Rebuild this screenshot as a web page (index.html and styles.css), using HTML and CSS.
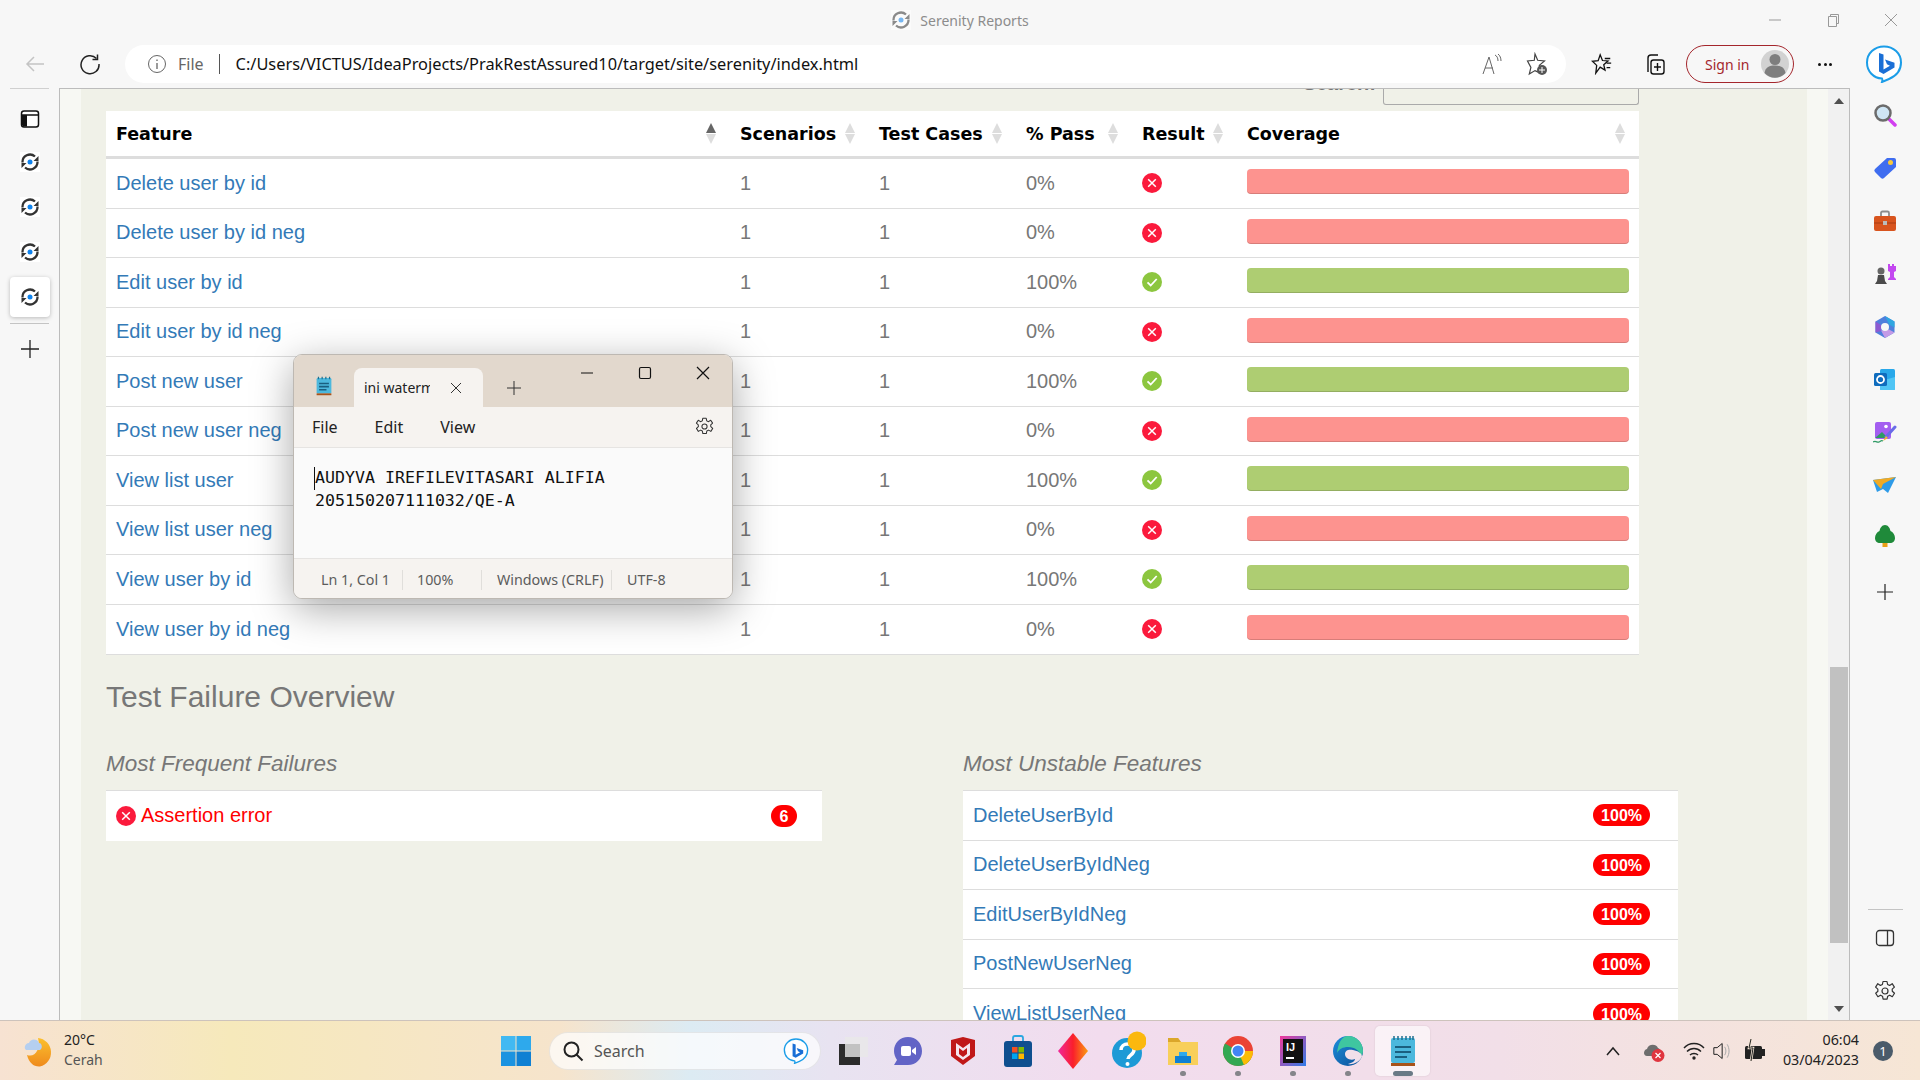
FILE: index.html
```html
<!DOCTYPE html>
<html lang="en">
<head>
    <meta charset="UTF-8" />
    <title>Serenity Reports</title>
    <link rel="stylesheet" href="styles.css">
</head>
<body>
    <svg class="defs" width="0" height="0">
        <defs>
            <symbol id="sync" viewBox="0 0 20 20">
                <rect width="20" height="20" fill="#fff" />
                <path d="M2.500 10.500a7.500 7.500 0 0 1 12.500-6M17.500 9.500a7.500 7.500 0 0 1-12.500 6" fill="none" stroke="#333" stroke-width="2.300" />
                <path d="M18.500 4v5h-5zM1.500 16v-5h5z" fill="#333" />
                <circle cx="10" cy="10" r="2.500" fill="#0f83ee" />
            </symbol>
            <symbol id="fail" viewBox="0 0 20 20">
                <circle cx="10" cy="10" r="10" fill="#fb1a3c" />
                <path d="M6.200 6.200l7.600 7.600M13.800 6.200l-7.600 7.600" stroke="#fff" stroke-width="1.500" />
            </symbol>
            <symbol id="pass" viewBox="0 0 20 20">
                <circle cx="10" cy="10" r="10" fill="#8cc63f" />
                <path d="M5.500 10.300l3.200 3.200 6-6.500" fill="none" stroke="#fff" stroke-width="1.800" />
            </symbol>
            <symbol id="bing" viewBox="0 0 38 38">
                <path d="M19 1.500c9.500 0 17 6.800 17 16 0 8-5 13.500-12 16.500l-7 3c.5-1.500.5-2.800 0-3.500C8.500 33 2 26.500 2 17.500 2 8.300 9.500 1.500 19 1.500z" fill="#fff" stroke="#1b9de8" stroke-width="2" />
                <path d="M14 8l4.500 1.500v15l6.500-3.700-3-1.500-2-4.800 9.500 3.300v4.700L18.500 29 14 26.500z" fill="#1a6fd6" />
            </symbol>
            <symbol id="gear" viewBox="0 0 22 22">
                <path d="M9 1.500h4l.6 3 2 .9 2.600-1.700 2.200 3.400-2.200 2 .1 2.100 2.200 2-2.200 3.500-2.600-1.500-2 1-.6 3h-4l-.6-3-2-1-2.600 1.500-2.200-3.500 2.200-2-.1-2.100-2.200-2 2.200-3.400 2.600 1.700 2-.9z" fill="none" stroke="#333" stroke-width="1.200" stroke-linejoin="round" />
                <circle cx="11" cy="11" r="3" fill="none" stroke="#333" stroke-width="1.200" />
            </symbol>
        </defs>
    </svg>

    <header class="titlebar">
        <svg class="title-icon" width="20" height="20"><use href="#sync" /></svg>
        <span class="title-text">Serenity Reports</span>
        <div class="win-btns">
            <svg width="14" height="14" viewBox="0 0 14 14"><path d="M1 7h12" stroke="#999" /></svg>
            <svg width="14" height="14" viewBox="0 0 14 14"><path d="M2.500 3.500h8v10h-8zM4.500 3.500v-2h8v9h-2" fill="none" stroke="#999" /></svg>
            <svg width="14" height="14" viewBox="0 0 14 14"><path d="M1 1l12 12M13 1L1 13" stroke="#999" /></svg>
        </div>
    </header>

    <nav class="toolbar">
        <svg class="tool-back" width="22" height="22" viewBox="0 0 22 22"><path d="M20 11H3M10 4l-7 7 7 7" fill="none" stroke="#c4c4c4" stroke-width="1.500" /></svg>
        <svg class="tool-reload" width="22" height="22" viewBox="0 0 22 22"><path d="M17.500 5.500A9 9 0 1 0 20 11" fill="none" stroke="#222" stroke-width="1.500" /><path d="M18.500 1.500v5h-5" fill="none" stroke="#222" stroke-width="1.500" /></svg>
        <div class="address">
            <svg width="20" height="20" viewBox="0 0 20 20"><circle cx="10" cy="10" r="8.500" fill="none" stroke="#666" /><path d="M10 9v6M10 5.500v1.500" stroke="#666" stroke-width="1.300" /></svg>
            <span class="addr-file">File</span>
            <span class="addr-sep"></span>
            <span class="addr-url">C:/Users/VICTUS/IdeaProjects/PrakRestAssured10/target/site/serenity/index.html</span>
            <svg class="addr-read" width="24" height="24" viewBox="0 0 24 24"><path d="M3 22l6-17 5 17M5 16h8M15 3c2 1 3 3 3 6M18 2c2 1.500 3 4 3 7" fill="none" stroke="#666" /></svg>
            <svg class="addr-star" width="24" height="24" viewBox="0 0 24 24"><path d="M11 2l2.700 6.300 6.800.6-5.200 4.500 1.500 3-2 4-3.800-1.800-5.700 3.400 1.600-6.600L3.500 9l6.800-.7z" fill="none" stroke="#444" stroke-width="1.200" /><circle cx="18" cy="18" r="5" fill="#555" /><path d="M18 15v6M15 18h6" stroke="#fff" /></svg>
        </div>
        <svg class="tool-fav" width="22" height="22" viewBox="0 0 24 24"><path d="M10 2l2.500 6.200 6 .5-4.600 4 1.400 6-5.300-3.200-4.800 6.500 1-8.500-4.700-4.500 6.300-.6z" fill="none" stroke="#111" stroke-width="1.400" /><path d="M15 6h6M17 11h5M17 16h4" stroke="#111" stroke-width="1.400" /></svg>
        <svg class="tool-coll" width="24" height="24" viewBox="0 0 24 24"><path d="M6 20V6q0-3 3-3h7" fill="none" stroke="#111" stroke-width="1.400" /><rect x="9" y="8" width="13" height="14" rx="2.500" fill="none" stroke="#111" stroke-width="1.400" /><path d="M15.500 11v8M12 15h7" stroke="#111" stroke-width="1.400" /></svg>
        <div class="signin">
            <span>Sign in</span>
            <svg width="28" height="28" viewBox="0 0 28 28"><circle cx="14" cy="14" r="14" fill="#d2d2d2" /><circle cx="14" cy="9.500" r="5.500" fill="#7e7e7e" /><path d="M3.500 23c1-6 5-7.500 10.500-7.500s9.500 1.500 10.500 7.500a14 14 0 0 1-21 0z" fill="#7e7e7e" /></svg>
        </div>
        <span class="dots"><i></i><i></i><i></i></span>
        <svg class="tool-bing" width="38" height="38"><use href="#bing" /></svg>
    </nav>

    <div class="middle">
        <aside class="left-rail">
            <svg class="rail-panel" width="20" height="20" viewBox="0 0 20 20"><rect x="1.500" y="2" width="17" height="16" rx="2.500" fill="#fff" stroke="#111" stroke-width="1.500" /><path d="M1.500 6h17" stroke="#111" stroke-width="1.500" /><path d="M2 6h5v11.500H4q-2 0-2-2z" fill="#111" /></svg>
            <span class="rail-tab"><svg width="20" height="20"><use href="#sync" /></svg></span>
            <span class="rail-tab"><svg width="20" height="20"><use href="#sync" /></svg></span>
            <span class="rail-tab"><svg width="20" height="20"><use href="#sync" /></svg></span>
            <span class="rail-tab active"><svg width="20" height="20"><use href="#sync" /></svg></span>
            <span class="rail-line"></span>
            <svg class="rail-plus" width="18" height="18" viewBox="0 0 18 18"><path d="M0 9h18M9 0v18" stroke="#222" stroke-width="1.300" /></svg>
        </aside>

        <main class="page">
            <div class="gutter"></div>
            <div class="content">
                <div class="search-row">
                    <label class="search-label">Search:</label>
                    <div class="search-input"></div>
                </div>

                <table class="features">
                    <thead>
                        <tr>
                            <th class="c-feature"><div>Feature<span class="sort asc"></span></div></th>
                            <th class="c-scen"><div>Scenarios<span class="sort"></span></div></th>
                            <th class="c-case"><div>Test Cases<span class="sort"></span></div></th>
                            <th class="c-pass"><div>% Pass<span class="sort"></span></div></th>
                            <th class="c-result"><div>Result<span class="sort"></span></div></th>
                            <th class="c-cover"><div>Coverage<span class="sort"></span></div></th>
                        </tr>
                    </thead>
                    <tbody>
                        <tr><td><a href="#">Delete user by id</a></td><td>1</td><td>1</td><td>0%</td><td><svg class="status"><use href="#fail" /></svg></td><td><div class="bar red"></div></td></tr>
                        <tr><td><a href="#">Delete user by id neg</a></td><td>1</td><td>1</td><td>0%</td><td><svg class="status"><use href="#fail" /></svg></td><td><div class="bar red"></div></td></tr>
                        <tr><td><a href="#">Edit user by id</a></td><td>1</td><td>1</td><td>100%</td><td><svg class="status"><use href="#pass" /></svg></td><td><div class="bar green"></div></td></tr>
                        <tr><td><a href="#">Edit user by id neg</a></td><td>1</td><td>1</td><td>0%</td><td><svg class="status"><use href="#fail" /></svg></td><td><div class="bar red"></div></td></tr>
                        <tr><td><a href="#">Post new user</a></td><td>1</td><td>1</td><td>100%</td><td><svg class="status"><use href="#pass" /></svg></td><td><div class="bar green"></div></td></tr>
                        <tr><td><a href="#">Post new user neg</a></td><td>1</td><td>1</td><td>0%</td><td><svg class="status"><use href="#fail" /></svg></td><td><div class="bar red"></div></td></tr>
                        <tr><td><a href="#">View list user</a></td><td>1</td><td>1</td><td>100%</td><td><svg class="status"><use href="#pass" /></svg></td><td><div class="bar green"></div></td></tr>
                        <tr><td><a href="#">View list user neg</a></td><td>1</td><td>1</td><td>0%</td><td><svg class="status"><use href="#fail" /></svg></td><td><div class="bar red"></div></td></tr>
                        <tr><td><a href="#">View user by id</a></td><td>1</td><td>1</td><td>100%</td><td><svg class="status"><use href="#pass" /></svg></td><td><div class="bar green"></div></td></tr>
                        <tr><td><a href="#">View user by id neg</a></td><td>1</td><td>1</td><td>0%</td><td><svg class="status"><use href="#fail" /></svg></td><td><div class="bar red"></div></td></tr>
                    </tbody>
                </table>

                <h2 class="overview-title">Test Failure Overview</h2>
                <div class="overview">
                    <section class="overview-col">
                        <h3>Most Frequent Failures</h3>
                        <div class="list">
                            <div class="list-row">
                                <span class="error-name"><svg class="status"><use href="#fail" /></svg>Assertion error</span>
                                <span class="badge round">6</span>
                            </div>
                        </div>
                    </section>
                    <section class="overview-col">
                        <h3>Most Unstable Features</h3>
                        <div class="list">
                            <div class="list-row"><a href="#">DeleteUserById</a><span class="badge">100%</span></div>
                            <div class="list-row"><a href="#">DeleteUserByIdNeg</a><span class="badge">100%</span></div>
                            <div class="list-row"><a href="#">EditUserByIdNeg</a><span class="badge">100%</span></div>
                            <div class="list-row"><a href="#">PostNewUserNeg</a><span class="badge">100%</span></div>
                            <div class="list-row"><a href="#">ViewListUserNeg</a><span class="badge">100%</span></div>
                        </div>
                    </section>
                </div>
            </div>
            <div class="gutter"></div>
            <div class="scrollbar">
                <span class="arrow-up"></span>
                <span class="thumb"></span>
                <span class="arrow-down"></span>
            </div>
        </main>

        <aside class="right-rail">
            <svg width="24" height="24" viewBox="0 0 24 24"><path d="M15 15l7 7" stroke="#d23ff0" stroke-width="3.500" stroke-linecap="round" /><circle cx="10" cy="10" r="7.500" fill="#cfe6f5" stroke="#6b6b6b" stroke-width="2.500" /></svg>
            <svg width="24" height="24" viewBox="0 0 24 24"><path d="M14 2h7q2 0 2 2v7L11 22q-1.500 1.500-3 0l-6-6q-1.500-1.500 0-3z" fill="#3f6df0" /><circle cx="17.500" cy="6.500" r="2.500" fill="#f8c83a" /></svg>
            <svg width="24" height="24" viewBox="0 0 24 24"><path d="M8 7V4q0-1.500 1.500-1.500h5Q16 2.500 16 4v3" fill="none" stroke="#8c8c8c" stroke-width="1.800" /><rect x="1" y="7" width="22" height="15" rx="2" fill="#d8541e" /><path d="M1 14h22" stroke="#a83c12" /><rect x="10" y="12" width="4" height="4" fill="#bbb" /></svg>
            <svg width="24" height="24" viewBox="0 0 24 24"><path d="M15 2h2v2h2V2h2v2h2v-2 7l-2 1v5l2 2v1h-8v-1l2-2v-5l-2-1z" fill="#c348f0" /><circle cx="8" cy="9" r="3.500" fill="#666" /><path d="M5 13h6l1 6 2 3H2l2-3z" fill="#4b4b4b" /></svg>
            <svg width="24" height="24" viewBox="0 0 24 24"><path d="M12 1l9.500 5.500v11L12 23l-9.500-5.500v-11z" fill="#4f7fdc" /><path d="M12 1l9.500 5.500v6L16 9.500z" fill="#2fa6e0" /><path d="M2.500 17.500v-11L8 10v6z" fill="#8d5ad0" /><path d="M12 23l9.500-5.500-5.500-3-8 1z" fill="#c49ae6" /><circle cx="12" cy="12" r="4" fill="#f7f7f7" /></svg>
            <svg width="24" height="24" viewBox="0 0 24 24"><rect x="7" y="1" width="15" height="21" rx="1.500" fill="#28a8ea" /><path d="M7 13l8-2 7-2v12q0 1-1 1H8q-1 0-1-1z" fill="#50c5f5" /><rect x="1" y="5" width="13" height="13" rx="1.500" fill="#0f6cbd" /><circle cx="7.500" cy="11.500" r="3.500" fill="none" stroke="#fff" stroke-width="1.800" /></svg>
            <svg width="24" height="24" viewBox="0 0 24 24"><rect x="2" y="1" width="16" height="17" rx="2" fill="#a35ef0" /><path d="M2 17l7-6 6 6z" fill="#2e9a64" /><circle cx="13" cy="5.500" r="1.800" fill="#fff" /><path d="M13 16l9-10" stroke="#6a6be8" stroke-width="3" stroke-linecap="round" /><path d="M10 20l3-5 2 2z" fill="#f5b52e" /><path d="M0 21c3-2 4 1 6 0s2-2 4-1" fill="none" stroke="#2e9a64" stroke-width="1.300" /></svg>
            <svg class="rail-send" width="24" height="24" viewBox="0 0 24 24"><path d="M0 7l23-3-8 16-5-4-6 3z" fill="#2e9be8" /><path d="M0 7l23-3L10 11l-2 5z" fill="#f0aa24" /></svg>
            <svg width="24" height="24" viewBox="0 0 24 24"><rect x="9.500" y="17" width="5" height="6" fill="#e8a017" /><path d="M12 1c3 0 5 3 5.500 6 2.500 1 4.500 4 4.500 7 0 3-2 5-5 5H7c-3 0-5-2-5-5 0-3 2-6 4.500-7C7 4 9 1 12 1z" fill="#1f8a3a" /></svg>
            <svg class="rail-plus" width="16" height="16" viewBox="0 0 16 16"><path d="M0 8h16M8 0v16" stroke="#222" stroke-width="1.200" /></svg>
            <span class="rail-spacer"></span>
            <span class="rail-line"></span>
            <svg width="20" height="18" viewBox="0 0 20 18"><rect x="1.500" y="1.500" width="17" height="15" rx="3" fill="none" stroke="#333" stroke-width="1.300" /><path d="M12.500 1.500v15" stroke="#333" stroke-width="1.300" /></svg>
            <svg class="rail-gear" width="22" height="22" viewBox="0 0 22 22"><use href="#gear" /></svg>
        </aside>
    </div>

    <footer class="taskbar">
        <div class="weather">
            <svg width="30" height="32" viewBox="0 0 30 32"><defs><linearGradient id="moon" x1="0" y1="0" x2="0" y2="1"><stop offset="0" stop-color="#fbc02e" /><stop offset="1" stop-color="#ef8a1c" /></linearGradient></defs><path d="M14 3a14.500 14.500 0 0 1 2 28.500C10 32 5 28 3 20c8 3 14-6 11-17z" fill="url(#moon)" /><path d="M2 15c-3-3 0-7 3-7 1-4 8-5 10 0 3 0 4 5 1 7z" fill="#b5cff0" /></svg>
            <div class="weather-text"><span>20°C</span><span class="muted">Cerah</span></div>
        </div>
        <svg class="start" width="30" height="30" viewBox="0 0 30 30"><rect width="14.500" height="14.500" fill="#42b9f2" /><rect x="15.500" width="14.500" height="14.500" fill="#2ea9ec" /><rect y="15.500" width="14.500" height="14.500" fill="#1b93e0" /><rect x="15.500" y="15.500" width="14.500" height="14.500" fill="#0f80d3" /></svg>
        <div class="task-search">
            <svg width="22" height="22" viewBox="0 0 22 22"><circle cx="9.500" cy="9.500" r="7" fill="none" stroke="#222" stroke-width="2" /><path d="M14.500 14.500l6 6" stroke="#222" stroke-width="2" /></svg>
            <span>Search</span>
            <svg class="task-bing" width="26" height="26"><use href="#bing" /></svg>
        </div>
        <div class="task-apps">
            <span class="app"><svg width="32" height="32" viewBox="0 0 32 32"><rect x="2" y="9" width="21" height="21" fill="#2b2b2b" /><rect x="8" y="2" width="23" height="20" fill="#e9e9e9" fill-opacity=".8" /></svg></span>
            <span class="app"><svg width="30" height="30" viewBox="0 0 30 30"><path d="M15 1c8 0 14 6 14 14s-6 14-14 14H1l3-5C2 21 1 18 1 15 1 7 7 1 15 1z" fill="#6264c6" /><rect x="8" y="10" width="10" height="10" rx="2" fill="#fff" /><path d="M19 14l4-3v8l-4-3z" fill="#fff" /></svg></span>
            <span class="app"><svg width="28" height="30" viewBox="0 0 28 30"><path d="M2 4l12-3 12 3v16l-12 9-12-9z" fill="#c01818" /><path d="M7 7l7 5 7-5v12l-7 5-7-5z" fill="#f5e6ee" /><path d="M10 12l4 3 4-3v6l-4 3-4-3z" fill="#c01818" /></svg></span>
            <span class="app"><svg width="28" height="32" viewBox="0 0 28 32"><path d="M9 7V3q0-2 2-2h6q2 0 2 2v4" fill="none" stroke="#2aa7e0" stroke-width="1.800" /><rect x="0" y="6" width="28" height="26" rx="3" fill="#0f4f8f" /><rect x="8" y="12" width="5.500" height="5.500" fill="#f25022" /><rect x="14.500" y="12" width="5.500" height="5.500" fill="#7fba00" /><rect x="8" y="18.500" width="5.500" height="5.500" fill="#00a4ef" /><rect x="14.500" y="18.500" width="5.500" height="5.500" fill="#ffb900" /></svg></span>
            <span class="app"><svg width="30" height="36" viewBox="0 0 30 36"><defs><linearGradient id="rhomb" x1="0" x2="1"><stop offset="0" stop-color="#f0289a" /><stop offset=".5" stop-color="#fa1f2c" /><stop offset="1" stop-color="#fb9d10" /></linearGradient></defs><path d="M15 0l15 18-15 18L0 18z" fill="url(#rhomb)" /></svg></span>
            <span class="app app-help"><svg width="34" height="40" viewBox="0 0 34 40"><circle cx="15" cy="22" r="15" fill="#1d9ad6" /><path d="M9 19c0-8 13-8 13 0 0 5-6 5-6 9" fill="none" stroke="#fff" stroke-width="3.500" /><circle cx="15.500" cy="33" r="2" fill="#fff" /><circle cx="25" cy="10" r="9.500" fill="#fbb80f" /></svg></span>
            <span class="app run"><svg width="30" height="28" viewBox="0 0 30 28"><path d="M0 3q0-2 2-2h8l3 4h17v23H0z" fill="#f8cf5a" /><path d="M0 1h10l3 4H0z" fill="#dba72a" /><path d="M7 19h16v7H7z" fill="#0f80d3" /><path d="M11 15h8v4h-8z" fill="#2ea9ec" /></svg></span>
            <span class="app run"><svg width="30" height="30" viewBox="0 0 30 30"><circle cx="15" cy="15" r="15" fill="#ea4335" /><path d="M15 15L2 7.500A15 15 0 0 0 15 30z" fill="#34a853" /><path d="M15 15l13 7.500A15 15 0 0 1 15 30z" fill="#34a853" /><path d="M15 15h15a15 15 0 0 1-9 14z" fill="#fbbc05" /><circle cx="15" cy="15" r="7" fill="#fff" /><circle cx="15" cy="15" r="5.500" fill="#4285f4" /></svg></span>
            <span class="app run"><svg width="28" height="30" viewBox="0 0 28 30"><defs><linearGradient id="idea" x1="0" y1="0" x2="1" y2="1"><stop offset="0" stop-color="#f0389a" /><stop offset="1" stop-color="#2e7de8" /></linearGradient></defs><rect x="1" width="26" height="30" fill="url(#idea)" /><rect x="4" y="3" width="20" height="24" fill="#111" /><text x="7" y="15" class="idea-text">IJ</text><rect x="7" y="21" width="8" height="2" fill="#fff" /></svg></span>
            <span class="app run"><svg width="30" height="30" viewBox="0 0 30 30"><defs><linearGradient id="edge" x1="0" y1="0" x2="1" y2="1"><stop offset="0" stop-color="#1c8fdc" /><stop offset="1" stop-color="#0c4f96" /></linearGradient></defs><circle cx="15" cy="15" r="15" fill="url(#edge)" /><path d="M15 0c9 0 15 7 15 15 0 2-1 4-2 5-1-5-6-9-13-9-5 0-9 2-11 6C5 7 9 0 15 0z" fill="#3fc6a0" /><path d="M12 18c0-4 4-5 8-4 5 1 9 3 9 7-3 5-9 8-14 7 4-1 7-3 7-5-5 2-10-1-10-5z" fill="#f1e0ea" /></svg></span>
            <span class="app active"><svg width="26" height="32" viewBox="0 0 26 32"><rect x="1" y="3" width="24" height="25" rx="2" fill="#4cb8dd" /><path d="M4 1v4M8 1v4M12 1v4M16 1v4M20 1v4M23 1v4" stroke="#1f6f8f" stroke-width="1.500" /><path d="M5 12h16M5 17h16M5 22h12" stroke="#1a5f80" stroke-width="2" /><rect x="1" y="28" width="24" height="3" fill="#a8531a" /></svg></span>
        </div>
        <div class="tray">
            <svg class="tray-chev" width="16" height="10" viewBox="0 0 16 10"><path d="M2 9l6-7 6 7" fill="none" stroke="#222" stroke-width="1.500" /></svg>
            <svg class="tray-cloud" width="22" height="24" viewBox="0 0 22 24"><path d="M4 17c-4 0-4-6 0-7 1-5 9-6 11-1 3 1 3 5 2 8z" fill="#6d6d6d" /><circle cx="15" cy="16.500" r="6.500" fill="#e0353f" /><path d="M12.500 14l5 5M17.500 14l-5 5" stroke="#fff" stroke-width="1.200" /></svg>
            <svg class="tray-wifi" width="22" height="20" viewBox="0 0 22 20"><path d="M1 7c5-6 15-6 20 0M4 10.500c4-4 10-4 14 0M7 14c2-2 6-2 8 0" fill="none" stroke="#222" stroke-width="1.400" /><circle cx="11" cy="17" r="1.700" fill="#222" /></svg>
            <svg class="tray-vol" width="20" height="22" viewBox="0 0 24 26"><path d="M1 9v8h4l6 5V4L5 9z" fill="none" stroke="#222" stroke-width="1.200" /><path d="M14 8c2 3 2 7 0 10M17 5c3 5 3 11 0 16" fill="none" stroke="#aaa" stroke-width="1.200" /></svg>
            <svg class="tray-bat" width="22" height="26" viewBox="0 0 22 26"><rect x="1" y="8" width="17" height="13" rx="1.500" fill="#222" /><rect x="18" y="11" width="3" height="7" fill="#222" /><path d="M7 1l-2 9h4l-2 13" fill="none" stroke="#f5e6d5" stroke-width="2.500" /><path d="M7 1l-2 9h4l-2 13" fill="none" stroke="#222" /></svg>
            <div class="clock"><span>06:04</span><span>03/04/2023</span></div>
            <span class="notif">1</span>
        </div>
    </footer>

    <div class="notepad">
        <div class="np-title">
            <svg class="np-icon" width="16" height="20" viewBox="0 0 26 32"><rect x="1" y="3" width="24" height="25" rx="2" fill="#4cb8dd" /><path d="M4 1v4M10 1v4M16 1v4M22 1v4" stroke="#1f6f8f" stroke-width="2" /><path d="M5 12h16M5 17h16M5 22h12" stroke="#1a5f80" stroke-width="2.500" /><rect x="1" y="28" width="24" height="3" fill="#a8531a" /></svg>
            <div class="np-tab">
                <span class="np-tab-name">ini watermark</span>
                <svg width="12" height="12" viewBox="0 0 12 12"><path d="M1 1l10 10M11 1L1 11" stroke="#333" /></svg>
            </div>
            <svg class="np-new" width="14" height="14" viewBox="0 0 14 14"><path d="M0 7h14M7 0v14" stroke="#333" /></svg>
            <div class="np-controls">
                <svg width="14" height="14" viewBox="0 0 14 14"><path d="M1 7h12" stroke="#111" stroke-width="1.200" /></svg>
                <svg width="14" height="14" viewBox="0 0 14 14"><rect x="1.500" y="1.500" width="11" height="11" rx="1.500" fill="none" stroke="#111" stroke-width="1.200" /></svg>
                <svg width="14" height="14" viewBox="0 0 14 14"><path d="M1 1l12 12M13 1L1 13" stroke="#111" stroke-width="1.200" /></svg>
            </div>
        </div>
        <div class="np-menu">
            <span>File</span><span>Edit</span><span>View</span>
            <svg width="19" height="19" viewBox="0 0 22 22"><use href="#gear" /></svg>
        </div>
        <div class="np-text"><span class="caret"></span>AUDYVA IREFILEVITASARI ALIFIA<br>205150207111032/QE-A</div>
        <div class="np-status">
            <span class="st-pos">Ln 1, Col 1</span>
            <span class="st-zoom">100%</span>
            <span class="st-eol">Windows (CRLF)</span>
            <span class="st-enc">UTF-8</span>
        </div>
    </div>
</body>
</html>
```

FILE: styles.css
```css
* {
    box-sizing: border-box;
}
html,
body {
    height: 100%;
}
body {
    margin: 0;
    overflow: hidden;
    display: flex;
    flex-direction: column;
    background: #f7f7f7;
    font-family: "Liberation Sans", Arial, sans-serif;
}
svg {
    display: block;
    flex: none;
}
.defs {
    position: absolute;
}

/* browser frame */
.titlebar {
    height: 40px;
    display: flex;
    align-items: center;
    justify-content: center;
    position: relative;
    font-family: "Noto Sans", sans-serif;
    font-size: 14px;
    color: #8c8c8c;
}
.title-icon {
    margin-right: 9px;
    opacity: 0.55;
}
.win-btns {
    position: absolute;
    right: 22px;
    top: 13px;
    display: flex;
    gap: 44px;
}
.toolbar {
    height: 48px;
    display: flex;
    align-items: center;
    padding-left: 24px;
}
.tool-reload {
    margin-left: 33px;
}
.address {
    width: 1441px;
    height: 38px;
    margin-left: 24px;
    padding: 0 18px 0 22px;
    display: flex;
    align-items: center;
    background: #fff;
    border-radius: 19px;
    font-family: "Noto Sans", sans-serif;
    font-size: 16px;
}
.addr-file {
    margin-left: 11px;
    color: #666;
}
.addr-sep {
    width: 1px;
    height: 20px;
    margin: 0 16px 0 15px;
    background: #555;
}
.addr-url {
    color: #111;
    font-size: 16.350px;
}
.addr-read {
    margin-left: auto;
}
.addr-star {
    margin-left: 20px;
}
.tool-fav {
    margin-left: 25px;
}
.tool-coll {
    margin-left: 29px;
}
.signin {
    width: 108px;
    height: 38px;
    margin-left: 20px;
    padding: 0 4px 0 18px;
    display: flex;
    align-items: center;
    justify-content: space-between;
    border: 1.5px solid #a4262c;
    border-radius: 19px;
    font-family: "Noto Sans", sans-serif;
    font-size: 14px;
    color: #a4262c;
}
.dots {
    width: 14px;
    margin-left: 24px;
    display: flex;
    justify-content: space-between;
}
.dots i {
    width: 3px;
    height: 3px;
    border-radius: 50%;
    background: #111;
}
.tool-bing {
    margin-left: 33px;
}

.middle {
    flex: 1;
    min-height: 0;
    display: flex;
}
.left-rail {
    width: 59px;
    flex: none;
    display: flex;
    flex-direction: column;
    align-items: center;
    border-top: 1px solid transparent;
    position: relative;
}
.rail-panel {
    margin: 20px 0 13px;
}
.rail-tab {
    width: 40px;
    height: 40px;
    margin-bottom: 5px;
    display: flex;
    align-items: center;
    justify-content: center;
    border-radius: 4px;
}
.rail-tab.active {
    background: #fff;
    box-shadow: 0 1px 4px rgba(0, 0, 0, 0.25);
    margin-bottom: 0;
}
.left-rail .rail-line {
    margin-top: 6px;
}
.left-rail .rail-plus {
    margin-top: 16px;
}
.left-rail::before {
    content: "";
    position: absolute;
    top: -1px;
    left: 10px;
    width: 39px;
    height: 1px;
    background: #d0d0d0;
}
.rail-line {
    width: 39px;
    height: 1px;
    background: #c4c4c4;
    flex: none;
}
.right-rail {
    width: 70px;
    flex: none;
    display: flex;
    flex-direction: column;
    align-items: center;
    padding-top: 15px;
    gap: 29px;
}
.right-rail .rail-send {
    margin-top: -1px;
    margin-bottom: -2px;
}
.right-rail .rail-plus {
    margin-top: 7px;
}
.right-rail .rail-spacer {
    flex: 1;
    margin-top: -29px;
}
.right-rail .rail-line {
    width: 35px;
    margin-bottom: -10px;
}
.right-rail .rail-gear {
    margin: 4px 0 18px;
}

/* report page */
.page {
    flex: 1;
    min-width: 0;
    display: flex;
    background: #f0f1e8;
    border-top: 1px solid #bcbcbc;
    border-left: 1px solid #bcbcbc;
    border-right: 1px solid #bcbcbc;
    overflow: hidden;
}
.gutter {
    width: 21px;
    flex: none;
    background: #f7f8f3;
}
.content {
    flex: 1;
    min-width: 0;
    padding-left: 25px;
    overflow: hidden;
}
.search-row {
    width: 1533px;
    height: 16px;
    display: flex;
    justify-content: flex-end;
    align-items: flex-start;
    margin-bottom: 6px;
}
.search-label {
    margin: -17px 7px 0 0;
    font-size: 20px;
    font-weight: bold;
    color: #777;
    line-height: 23px;
}
.search-input {
    width: 256px;
    height: 16px;
    border: 1px solid #aaa;
    border-top: none;
    border-radius: 0 0 3px 3px;
}
.features {
    width: 1533px;
    table-layout: fixed;
    border-collapse: separate;
    border-spacing: 0;
    background: #fff;
    color: #777;
    font-size: 20px;
    border-bottom: 1px solid #ddd;
}
.features th {
    height: 48px;
    padding: 0 14px 0 10px;
    text-align: left;
    color: #000;
    font-family: "DejaVu Sans", sans-serif;
    font-size: 17.500px;
    border-bottom: 3px solid #ddd;
}
.features th div {
    display: flex;
    align-items: center;
    justify-content: space-between;
}
.c-feature {
    width: 624px;
}
.c-scen {
    width: 139px;
}
.c-case {
    width: 147px;
}
.c-pass {
    width: 116px;
}
.c-result {
    width: 105px;
}
.sort {
    width: 10px;
    height: 21px;
    display: block;
    position: relative;
    flex: none;
}
.sort::before,
.sort::after {
    content: "";
    position: absolute;
    left: 0;
    border-left: 5px solid transparent;
    border-right: 5px solid transparent;
}
.sort::before {
    top: 0;
    border-bottom: 10px solid #ddd;
}
.sort::after {
    bottom: 0;
    border-top: 10px solid #ddd;
}
.sort.asc::before {
    border-bottom-color: #666;
}
.features td {
    height: 49.500px;
    padding: 0 10px;
    border-bottom: 1px solid #ddd;
    vertical-align: middle;
}
.features tr:last-child td {
    border-bottom: none;
}
a {
    color: #337ab7;
    text-decoration: none;
}
.status {
    width: 20px;
    height: 20px;
}
.bar {
    width: 382px;
    height: 25px;
    margin-top: -3px;
    border-radius: 4px;
    box-shadow: inset 0 -1px 0 rgba(0, 0, 0, 0.15);
}
.bar.red {
    background: #fd938f;
}
.bar.green {
    background: #aecd72;
}
.overview-title {
    margin: 25px 0 0;
    font-size: 30px;
    line-height: 34px;
    font-weight: normal;
    color: #777;
}
.overview {
    display: flex;
    gap: 141px;
}
.overview-col {
    width: 716px;
}
.overview-col:last-child {
    width: 715px;
}
.overview-col h3 {
    margin: 37px 0 13px;
    font-size: 22.500px;
    line-height: 26px;
    font-weight: normal;
    font-style: italic;
    color: #777;
}
.list {
    background: #fff;
    border-top: 1px solid #ddd;
    font-size: 20px;
}
.list-row {
    height: 49.500px;
    padding: 0 28px 0 10px;
    display: flex;
    align-items: center;
    justify-content: space-between;
    border-bottom: 1px solid #ddd;
}
.list-row:last-child {
    border-bottom: none;
}
.error-name {
    display: flex;
    align-items: center;
    gap: 5px;
    color: #f00;
}
.badge {
    min-width: 26px;
    height: 22px;
    padding: 0 8px;
    border-radius: 11px;
    background: #f00;
    color: #fff;
    font-size: 16px;
    font-weight: bold;
    line-height: 23px;
    text-align: center;
}
.badge.round {
    margin-right: -3px;
    padding: 0;
}
.scrollbar {
    width: 21px;
    flex: none;
    display: flex;
    flex-direction: column;
    align-items: center;
    background: #f1f1f1;
    padding-top: 9px;
}
.arrow-up,
.arrow-down {
    width: 0;
    height: 0;
    border-left: 5px solid transparent;
    border-right: 5px solid transparent;
}
.arrow-up {
    border-bottom: 6px solid #505050;
}
.thumb {
    width: 18px;
    height: 276px;
    margin: 563px 0 63px;
    background: #c1c1c1;
}
.arrow-down {
    border-top: 6px solid #505050;
}

/* taskbar */
.taskbar {
    height: 60px;
    flex: none;
    display: flex;
    align-items: center;
    border-top: 1px solid #cdc3bc;
    background: linear-gradient(to right, #f7e2d2 0, #f6e9bb 230px, #f6e4cc 560px, #dcebf3 690px, #e8e3f1 830px, #f2dcee 1100px, #f2dfe8 1500px, #f6e6d5 1920px);
    font-family: "Noto Sans", sans-serif;
    color: #222;
}
.weather {
    width: 501px;
    padding-left: 24px;
    display: flex;
    align-items: center;
    gap: 10px;
}
.weather-text {
    display: flex;
    flex-direction: column;
    margin-top: -2px;
    font-size: 14px;
    line-height: 20px;
}
.muted {
    color: #555;
}
.task-search {
    width: 272px;
    height: 38px;
    margin-left: 18px;
    padding: 0 11px 0 12px;
    display: flex;
    align-items: center;
    gap: 10px;
    background: rgba(255, 255, 255, 0.7);
    border: 1px solid rgba(0, 0, 0, 0.08);
    border-radius: 19px;
    font-size: 16px;
    color: #555;
}
.task-bing {
    margin-left: auto;
}
.task-apps {
    display: flex;
    margin-left: 4px;
}
.app {
    width: 55px;
    height: 50px;
    display: flex;
    align-items: center;
    justify-content: center;
    position: relative;
}
.app-help svg {
    margin-left: 2px;
}
.app.run::after,
.app.active::after {
    content: "";
    position: absolute;
    bottom: 0;
    left: 50%;
    width: 6px;
    height: 5px;
    margin-left: -3px;
    border-radius: 3px;
    background: #85858a;
}
.app.active {
    background: rgba(255, 255, 255, 0.6);
    border-radius: 5px;
    box-shadow: 0 0 2px rgba(0, 0, 0, 0.12);
}
.app.active::after {
    width: 20px;
    margin-left: -10px;
    background: #6a7a86;
}
.idea-text {
    font-family: "Liberation Sans", sans-serif;
    font-size: 11px;
    font-weight: bold;
    fill: #fff;
}
.tray {
    flex: 1;
    padding-left: 175px;
    display: flex;
    align-items: center;
}
.tray-cloud {
    margin-left: 22px;
}
.tray-wifi {
    margin-left: 18px;
}
.tray-vol {
    margin-left: 8px;
}
.tray-bat {
    margin-left: 11px;
}
.clock {
    width: 90px;
    margin-left: 3px;
    margin-top: -2px;
    display: flex;
    flex-direction: column;
    align-items: flex-end;
    font-size: 14.300px;
    line-height: 20px;
}
.notif {
    width: 20px;
    height: 20px;
    margin-left: 14px;
    border-radius: 50%;
    background: #4a5b6a;
    color: #fff;
    font-size: 13px;
    line-height: 20px;
    text-align: center;
}

/* notepad window, floats over the page */
.notepad {
    position: absolute;
    left: 293px;
    top: 354px;
    width: 440px;
    height: 245px;
    display: flex;
    flex-direction: column;
    border: 1px solid #bdb8b2;
    border-radius: 9px;
    overflow: hidden;
    background: #fafafa;
    font-family: "Noto Sans", sans-serif;
    color: #222;
    box-shadow: 0 10px 40px rgba(0, 0, 0, 0.35);
}
.np-title {
    height: 52px;
    flex: none;
    display: flex;
    align-items: flex-end;
    position: relative;
    background: #e2d8cd;
}
.np-icon {
    margin: 0 0 11px 22px;
}
.np-tab {
    width: 129px;
    height: 39px;
    margin-left: 22px;
    padding: 0 21px 0 10px;
    display: flex;
    align-items: center;
    justify-content: space-between;
    background: #f6f3f0;
    border-radius: 8px 8px 0 0;
}
.np-tab-name {
    width: 66px;
    overflow: hidden;
    white-space: nowrap;
    font-size: 14px;
}
.np-new {
    margin: 0 0 12px 24px;
}
.np-controls {
    position: absolute;
    top: 11px;
    right: 22px;
    display: flex;
    gap: 44px;
}
.np-menu {
    height: 41px;
    flex: none;
    padding: 0 18px 0 18px;
    display: flex;
    align-items: center;
    gap: 37px;
    background: #f6f3f0;
    border-bottom: 1px solid #e6e4e2;
    font-size: 16px;
}
.np-menu svg {
    margin-left: auto;
    margin-top: -2px;
}
.np-text {
    flex: 1;
    padding: 19px 21px 0;
    position: relative;
    font-family: "DejaVu Sans Mono", "Liberation Mono", monospace;
    font-size: 16.600px;
    line-height: 22.500px;
    color: #111;
}
.caret {
    position: absolute;
    left: 20px;
    top: 19px;
    width: 1px;
    height: 23px;
    background: #111;
}
.np-status {
    height: 40px;
    flex: none;
    display: flex;
    align-items: center;
    padding-top: 2px;
    background: #f6f3f0;
    border-top: 1px solid #e6e4e2;
    font-size: 14.300px;
    color: #5c5c5c;
}
.np-status span {
    height: 20px;
    line-height: 20px;
    border-right: 1px solid #e0dedb;
}
.st-pos {
    width: 109px;
    padding-left: 27px;
}
.st-zoom {
    width: 79px;
    padding-left: 14px;
}
.st-eol {
    width: 130px;
    padding-left: 15px;
    white-space: nowrap;
}
.np-status .st-enc {
    padding-left: 15px;
    border-right: none;
}
```
